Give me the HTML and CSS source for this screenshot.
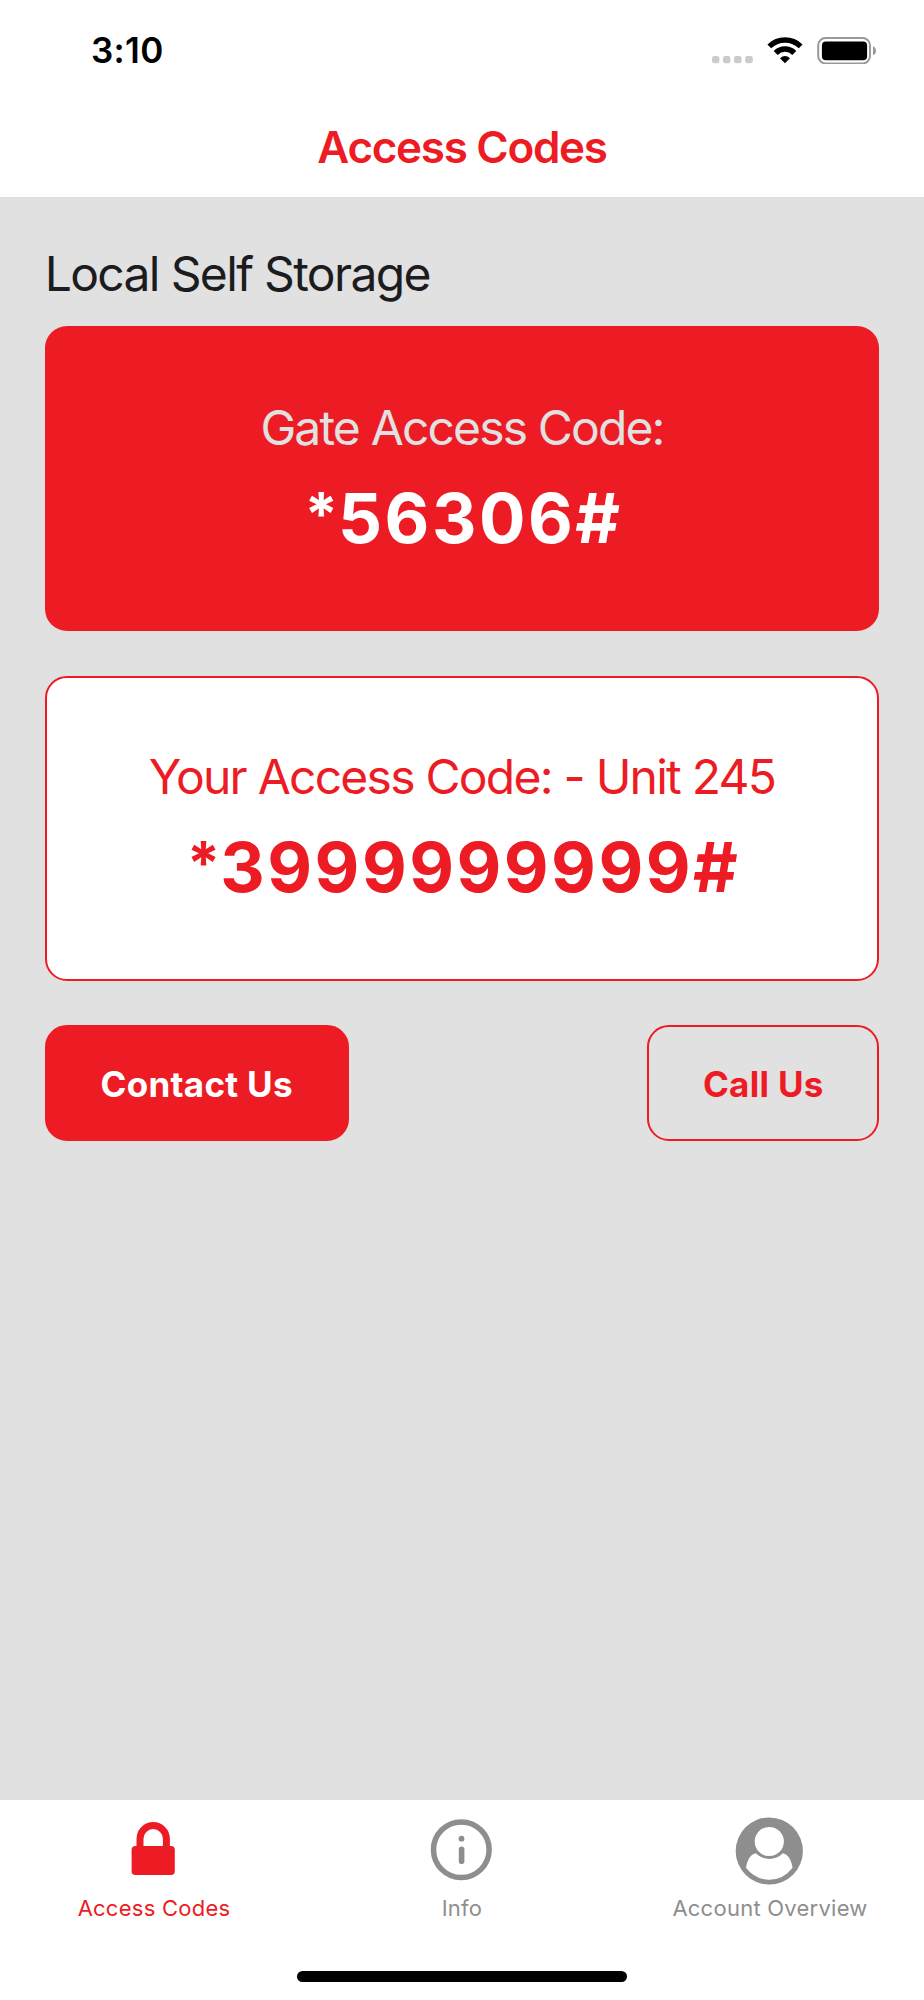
FILE: index.html
```html
<!DOCTYPE html>
<html lang="en">
<head>
<meta charset="utf-8">
<title>Access Codes</title>
<link rel="stylesheet" href="styles.css">
</head>
<body>
<div class="app">
  <div class="status-bar">
    <span class="time">3:10</span>
    <div class="status-icons">
      <svg class="icon-signal" width="42" height="27" viewBox="0 0 42 27" fill="#cbcbcb">
        <rect x="0" y="19" width="7.4" height="7.3" rx="2.4"/><rect x="11" y="19" width="7.4" height="7.3" rx="2.4"/><rect x="22" y="19" width="7.6" height="7.3" rx="2.4"/><rect x="33.2" y="19" width="7.6" height="7.3" rx="2.4"/>
      </svg>
      <svg class="icon-wifi" width="36" height="27" viewBox="0 0 36 27" fill="none" stroke="#000">
        <path d="M2.3 9.4A22.5 22.5 0 0 1 33.7 9.4" stroke-width="5.4"/>
        <path d="M8.7 15.9A13.2 13.2 0 0 1 27.3 15.9" stroke-width="5.6"/>
        <path d="M13 21.2Q18 16.8 23 21.2L18 26.2Z" fill="#000" stroke="none"/>
      </svg>
      <svg class="icon-battery" width="60" height="27" viewBox="0 0 60 27">
        <rect x="1.2" y="1" width="51.8" height="25.4" rx="7.4" fill="none" stroke="#999" stroke-width="2"/>
        <rect x="4.9" y="4.4" width="45.2" height="18.800" rx="4" fill="#000"/>
        <path d="M56 9.200Q59 10.500 59 13.700Q59 16.700 56 18.200Z" fill="#999"/>
      </svg>
    </div>
  </div>
  <header class="header"><h1 class="title">Access Codes</h1></header>
  <main class="content">
    <h2 class="facility">Local Self Storage</h2>
    <section class="card card-solid">
      <p class="card-label gate-label">Gate Access Code:</p>
      <p class="card-code"><span class="star">*</span>56306#</p>
    </section>
    <section class="card card-outline">
      <p class="card-label">Your Access Code: - Unit 245</p>
      <p class="card-code"><span class="star">*</span>3999999999#</p>
    </section>
    <div class="actions">
      <button class="btn btn-solid">Contact Us</button>
      <button class="btn btn-outline">Call Us</button>
    </div>
  </main>
  <nav class="tab-bar">
    <a class="tab tab-active">
      <svg width="72" height="72" viewBox="0 0 72 72">
        <path d="M22 30V20.800a13.200 13.200 0 0 1 26.400 0V30" fill="none" stroke="currentColor" stroke-width="7"/>
        <rect x="13.600" y="28" width="43.200" height="29" rx="3.800" fill="currentColor"/>
      </svg>
      <span class="tab-label">Access Codes</span>
    </a>
    <a class="tab">
      <svg width="72" height="72" viewBox="0 0 72 72">
        <circle cx="35.300" cy="31.700" r="27.800" fill="none" stroke="currentColor" stroke-width="5.500"/>
        <circle cx="35.500" cy="20.700" r="2.900" fill="currentColor"/>
        <rect x="32.800" y="28.500" width="5.600" height="17.500" rx="2.800" fill="currentColor"/>
      </svg>
      <span class="tab-label">Info</span>
    </a>
    <a class="tab">
      <svg width="72" height="72" viewBox="0 0 72 72">
        <circle cx="35.300" cy="33" r="33.600" fill="currentColor"/>
        <circle cx="35.300" cy="23.500" r="14.600" fill="#fff"/>
        <path d="M12 49.700C13.500 41.500 16.500 36.500 21.700 35.300Q27.500 41 35.300 41Q43.100 41 48.900 35.300C54.100 36.500 57.100 41.500 58.600 49.700Q49.300 61.700 35.300 61.700Q21.300 61.700 12 49.700Z" fill="#fff"/>
      </svg>
      <span class="tab-label">Account Overview</span>
    </a>
    <div class="home-indicator"></div>
  </nav>
</div>
</body>
</html>
```
FILE: styles.css
```css
* { box-sizing: border-box; }

body {
  margin: 0;
  background: #fff;
  font-family: Inter, "Liberation Sans", sans-serif;
}

h1, h2, p { margin: 0; font-weight: 400; }

.app {
  display: flex;
  flex-direction: column;
  width: 924px;
  height: 2000px;
}

.status-bar {
  display: flex;
  justify-content: space-between;
  align-items: center;
  height: 98px;
  padding: 2px 47px 0 91px;
}

.time {
  font-size: 35px;
  font-weight: 600;
  letter-spacing: 0.3px;
}

.status-icons { display: flex; align-items: center; }
.status-icons svg { display: block; }
.icon-wifi { margin-left: 13px; }
.icon-battery { margin-left: 14px; }

.header {
  height: 98.5px;
  text-align: center;
}

.title {
  color: #ed1c24;
  font-size: 44px;
  font-weight: 600;
  line-height: 98.5px;
  letter-spacing: -1.3px;
}

.content {
  flex: 1;
  padding: 46px 44.7px 0;
  background: #e1e1e1;
}

.facility {
  margin-bottom: 21.5px;
  color: #1c1c1e;
  font-size: 48px;
  line-height: 62px;
  letter-spacing: -1.65px;
}

.card {
  height: 305px;
  margin-bottom: 44.7px;
  padding-top: 70.5px;
  border-radius: 22px;
  text-align: center;
}

.card-solid { background: #ed1c24; color: #fff; }

.card-outline {
  padding-top: 68.5px;
  border: 2px solid #ed1c24;
  background: #fff;
  color: #ed1c24;
}

.card-label {
  font-size: 48px;
  line-height: 62px;
  letter-spacing: -1.75px;
}

.gate-label { color: #e1e1e1; letter-spacing: -1.85px; }

.card-code {
  margin-top: 18px;
  padding-left: 3px;
  font-size: 69px;
  font-weight: 700;
  line-height: 82px;
  letter-spacing: 2.5px;
}

.star {
  font-size: 60px;
  line-height: 0;
  vertical-align: 7px;
  letter-spacing: 0;
}

.actions { display: flex; justify-content: space-between; }

.btn {
  height: 116px;
  padding: 1px 0 0;
  border: 2px solid #ed1c24;
  border-radius: 22px;
  font-family: inherit;
  font-size: 35px;
  font-weight: 700;
  letter-spacing: 0.3px;
}

.btn-solid { width: 304px; background: #ed1c24; color: #fff; }
.btn-outline { width: 232px; background: transparent; color: #ed1c24; }

.tab-bar {
  position: relative;
  display: grid;
  grid-template-columns: repeat(3, 1fr);
  height: 200px;
  padding-top: 18px;
  background: #fff;
}

.tab {
  display: flex;
  flex-direction: column;
  align-items: center;
  color: #8e8e8e;
}

.tab svg { display: block; overflow: visible; }

.tab-active { color: #ed1c24; }

.tab-label {
  margin-top: 4px;
  font-size: 22px;
  line-height: 28px;
  letter-spacing: 0.25px;
}

.home-indicator {
  position: absolute;
  left: 297px;
  bottom: 18px;
  width: 330px;
  height: 11px;
  border-radius: 6px;
  background: #000;
}
```
